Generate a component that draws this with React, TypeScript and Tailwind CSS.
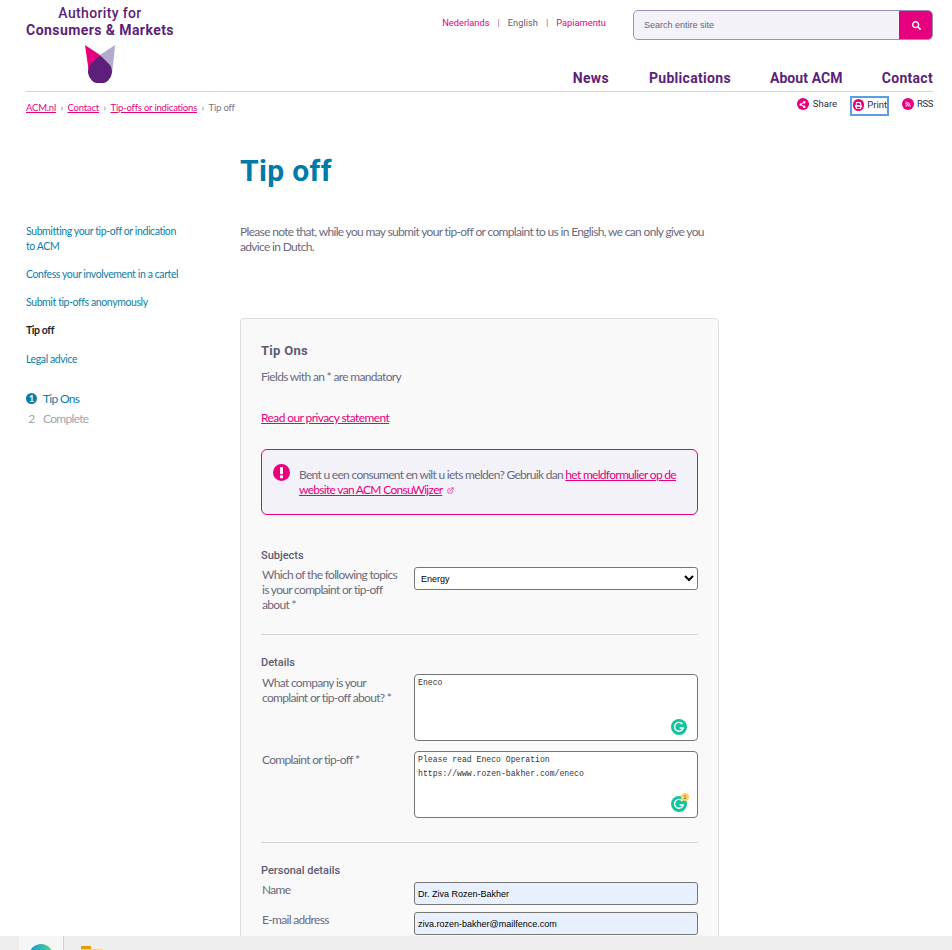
import { FaPrint, FaRss, FaSearch, FaShareAlt } from "react-icons/fa";
import { ExternalLink } from "lucide-react";

const din = "font-['Roboto',sans-serif]";

function Logo() {
  return (
    <div className={`w-[148px] pt-[5px] text-center text-[#5c1f7a] ${din}`}>
      <div className="text-[14px] leading-[17px] font-medium tracking-[0.35px]">Authority for</div>
      <div className="text-[14px] leading-[17px] font-bold tracking-[0.42px] whitespace-nowrap">Consumers &amp; Markets</div>
      <svg viewBox="0 0 30 38" className="mx-auto mt-[6px] block h-[38px] w-[30px]">
        <path d="M0 0 L15 10 L4 28 Z" fill="#e6007e" />
        <path d="M30 0 L15 10 L27 28 Q29 14 30 0 Z" fill="#b3aacd" />
        <path d="M15 10 L25 20 A12 12 0 1 1 5 20 Z" fill="#5c1f7a" />
      </svg>
    </div>
  );
}

function Header() {
  return (
    <header className="flex h-[92px] justify-between border-b border-[#d4d3da]">
      <Logo />
      <div className="flex flex-col items-end">
        <div className="mt-[10px] flex items-start">
          <div className={`mt-[6px] mr-[27px] flex text-[9.3px] leading-[14px] ${din}`}>
            <a className="text-[#e6007e]">Nederlands</a>
            <span className="mx-[8px] text-[#77768a]">|</span>
            <span className="text-[#5f5e70]">English</span>
            <span className="mx-[8px] text-[#77768a]">|</span>
            <a className="text-[#e6007e]">Papiamentu</a>
          </div>
          <div className="flex h-[30px] w-[300px] overflow-hidden rounded-[5px] border border-[#9a8dc4] bg-[#f4f2f9]">
            <input
              placeholder="Search entire site"
              className="min-w-0 flex-1 bg-transparent pt-[1px] pl-[10px] font-['Liberation_Sans',sans-serif] text-[9px] outline-none placeholder:text-[#66657a]"
            />
            <div className="-my-px -mr-px flex w-[34px] items-center justify-center bg-[#e6007e]">
              <FaSearch size={9} className="text-white" />
            </div>
          </div>
        </div>
        <nav className={`mt-[29px] flex gap-[39px] text-[14px] leading-[18px] font-bold tracking-[0.3px] text-[#5c1f7a] ${din}`}>
          <a className="mr-[1px]">News</a>
          <a>Publications</a>
          <a className="tracking-[0.1px]">About ACM</a>
          <a>Contact</a>
        </nav>
      </div>
    </header>
  );
}

function RoundIcon({ children }: { children: React.ReactNode }) {
  return (
    <span className="flex h-[12px] w-[12px] items-center justify-center rounded-full bg-[#e6007e] text-white">{children}</span>
  );
}

function Crumbs() {
  return (
    <div className="flex h-[28px] items-start justify-between">
      <div className="mt-[9px] flex gap-[4.5px] font-['Lato',sans-serif] text-[9.5px] leading-[13px] tracking-[-0.2px] text-[#77768a]">
        <a className="text-[#e6007e] underline">ACM.nl</a>
        <span>›</span>
        <a className="text-[#e6007e] underline">Contact</a>
        <span>›</span>
        <a className="text-[#e6007e] underline">Tip-offs or indications</a>
        <span>›</span>
        <span>Tip off</span>
      </div>
      <div className={`mt-[4px] flex items-start text-[9.5px] leading-[12px] text-[#2f2e3c] ${din}`}>
        <span className="mt-[2px] flex items-center gap-[4px]">
          <RoundIcon><FaShareAlt size={7} /></RoundIcon>Share
        </span>
        <span className="mx-[13px] flex h-[20px] w-[39px] items-center gap-[3px] border-2 border-[#5a9fe3] pl-[1px] pb-[2px]">
          <RoundIcon><FaPrint size={7} /></RoundIcon>Print
        </span>
        <span className="mt-[2px] flex items-center gap-[3px] tracking-[-0.4px]">
          <RoundIcon><FaRss size={6} /></RoundIcon>RSS
        </span>
      </div>
    </div>
  );
}

function Sidebar() {
  return (
    <aside className="w-[214px] shrink-0 pt-[104px] font-['Lato',sans-serif] text-[10.5px] leading-[15px] tracking-[-0.4px]">
      <ul className="flex w-[155px] flex-col gap-[13px] text-[#0a7ea8]">
        <li><a>Submitting your tip-off or indication to ACM</a></li>
        <li><a>Confess your involvement in a cartel</a></li>
        <li><a>Submit tip-offs anonymously</a></li>
        <li className="font-bold text-[#1d1d26]">Tip off</li>
        <li className="mt-[1px]"><a>Legal advice</a></li>
      </ul>
      <ol className="mt-[24px] flex flex-col gap-[5px] text-[12px] leading-[15px] tracking-[-0.7px]">
        <li className="flex items-center text-[#0a7ea8]">
          <span className="mr-[6px] flex h-[11px] w-[11px] items-center justify-center rounded-full bg-[#0a7ea8] text-[9px] font-bold tracking-normal text-white">1</span>
          Tip Ons
        </li>
        <li className="flex items-center text-[#a3a3ac]">
          <span className="mr-[6px] w-[11px] text-center">2</span>
          Complete
        </li>
      </ol>
    </aside>
  );
}

function Grammarly({ badge }: { badge?: boolean }) {
  return (
    <span className="absolute right-[11px] bottom-[6px] block h-[16px] w-[16px]">
      <svg viewBox="0 0 16 16" className="h-[16px] w-[16px]">
        <circle cx="8" cy="8" r="8" fill="#15c39a" />
        <path d="M11.5 5.2 A4.4 4.4 0 1 0 12.2 9 L8.6 9" fill="none" stroke="#fff" strokeWidth="1.4" />
      </svg>
      {badge && (
        <span className="absolute -top-[3px] -right-[2px] flex h-[8px] w-[8px] items-center justify-center rounded-full bg-[#fbd46d] font-['Liberation_Sans',sans-serif] text-[6px] leading-none text-[#7a5b10]">1</span>
      )}
    </span>
  );
}

const labelClass = "w-[153px] shrink-0 pl-[1px] pr-[11px] text-[12px] leading-[15px] tracking-[-0.68px] text-[#6b6a7d]";
const sectionClass = `text-[11px] leading-[14px] font-medium text-[#5d5c72] ${din}`;

function AreaField({ label, value, badge, top }: { label: string; value: string; badge?: boolean; top: string }) {
  return (
    <div className={`flex ${top}`}>
      <div className={`${labelClass} pt-px`}>{label}</div>
      <div className="relative flex-1">
        <textarea
          readOnly
          defaultValue={value}
          className="block h-[67px] w-full resize-none rounded-[4px] border border-[#767676] bg-white px-[3px] py-px font-['Liberation_Mono',monospace] text-[8.13px] leading-[14px] text-[#333]"
        />
        <Grammarly badge={badge} />
      </div>
    </div>
  );
}

function InputField({ label, value, top }: { label: string; value: string; top: string }) {
  return (
    <div className={`flex ${top}`}>
      <div className={labelClass}>{label}</div>
      <input
        readOnly
        defaultValue={value}
        className="h-[23px] min-w-0 flex-1 rounded-[3px] border border-[#767676] bg-[#e8f0fe] px-[3px] font-['Liberation_Sans',sans-serif] text-[9px] text-black"
      />
    </div>
  );
}

function Card() {
  return (
    <section className="mt-[64px] w-[479px] rounded-[4px] border border-[#dddddd] bg-[#f9f9f9] px-[20px] pt-[24px] pb-[40px] font-['Lato',sans-serif]">
      <h2 className={`text-[13px] leading-[16px] font-bold tracking-[0.3px] text-[#5d5c72] ${din}`}>Tip Ons</h2>
      <p className="mt-[10px] text-[12px] leading-[15px] tracking-[-0.67px] text-[#6b6a7d]">Fields with an * are mandatory</p>
      <p className="mt-[26px] text-[12px] leading-[15px] tracking-[-0.6px] text-[#e6007e] underline">Read our privacy statement</p>

      <div className="mt-[24px] flex h-[66px] items-start rounded-[6px] border border-[#e6007e] bg-[#f4f2f9] pt-[14px] pr-[10px] pl-[11px]">
        <svg viewBox="0 0 18 18" className="mr-[9px] h-[17px] w-[17px] shrink-0">
          <circle cx="9" cy="9" r="9" fill="#e6007e" />
          <rect x="7.4" y="3.2" width="3.2" height="7.6" rx="1" fill="#fff" />
          <rect x="7.4" y="12" width="3.2" height="3" rx="0.8" fill="#fff" />
        </svg>
        <p className="pt-[3px] text-[12px] leading-[15px] tracking-[-0.7px] text-[#6b6a7d]">
          Bent u een consument en wilt u iets melden? Gebruik dan{" "}
          <a className="text-[#e6007e] underline">het meldformulier op de website van ACM ConsuWijzer</a>
          <ExternalLink size={7} strokeWidth={2} className="ml-[5px] inline-block text-[#e6007e]" />
        </p>
      </div>

      <h3 className={`mt-[34px] ${sectionClass}`}>Subjects</h3>
      <div className="mt-[4px] flex">
        <div className={labelClass}>Which of the following topics is your complaint or tip-off about *</div>
        <select
          defaultValue="Energy"
          className="h-[23px] min-w-0 flex-1 rounded-[3px] border border-[#767676] bg-white pl-[2px] font-['Liberation_Sans',sans-serif] text-[9px] text-black"
        >
          <option>Energy</option>
        </select>
      </div>

      <hr className="mt-[22px] border-t border-[#d4d3da]" />

      <h3 className={`mt-[21px] ${sectionClass}`}>Details</h3>
      <AreaField top="mt-[4px]" label="What company is your complaint or tip-off about? *" value="Eneco" />
      <AreaField
        top="mt-[10px]"
        label="Complaint or tip-off *"
        value={"Please read Eneco Operation\nhttps://www.rozen-bakher.com/eneco"}
        badge
      />

      <hr className="mt-[24px] border-t border-[#d4d3da]" />

      <h3 className={`mt-[21px] ${sectionClass}`}>Personal details</h3>
      <InputField top="mt-[4px]" label="Name" value="Dr. Ziva Rozen-Bakher" />
      <InputField top="mt-[7px]" label="E-mail address" value="ziva.rozen-bakher@mailfence.com" />
    </section>
  );
}

function Taskbar() {
  return (
    <div className="flex h-[14px] shrink-0 overflow-hidden bg-[#eeeeee]">
      <div className="ml-[19px] flex h-full w-[45px] justify-center border-r border-[#d0d0d0] bg-[#f6f6f6] pt-[8px]">
        <svg viewBox="0 0 24 24" className="h-[24px] w-[24px] shrink-0">
          <defs>
            <linearGradient id="edge" x1="0" y1="0" x2="1" y2="0">
              <stop offset="0" stopColor="#1f8fd8" />
              <stop offset="1" stopColor="#4bdc8c" />
            </linearGradient>
          </defs>
          <circle cx="12" cy="12" r="12" fill="url(#edge)" />
        </svg>
      </div>
      <div className="ml-[17px] pt-[10px]">
        <svg viewBox="0 0 22 16" className="h-[16px] w-[22px]">
          <path d="M0 0 H9 L11 3 H22 V16 H0 Z" fill="#ffd87a" />
          <path d="M0 0 H10 V3 H0 Z" fill="#e29c0e" />
        </svg>
      </div>
    </div>
  );
}

export default function App() {
  return (
    <div className="flex h-[950px] flex-col overflow-hidden bg-white font-['Lato',sans-serif]">
      <div className="min-h-0 flex-1 overflow-hidden pr-[19px] pl-[26px]">
        <Header />
        <Crumbs />
        <div className="flex">
          <Sidebar />
          <main className="min-w-0 flex-1">
            <h1 className={`mt-[31px] text-[30px] leading-[40px] font-bold tracking-[0.35px] text-[#007aa8] ${din}`}>Tip off</h1>
            <p className="mt-[33px] w-[480px] text-[12px] leading-[15px] tracking-[-0.67px] text-[#6b6a7d]">
              Please note that, while you may submit your tip-off or complaint to us in English, we can only give you advice in Dutch.
            </p>
            <Card />
          </main>
        </div>
      </div>
      <Taskbar />
    </div>
  );
}
